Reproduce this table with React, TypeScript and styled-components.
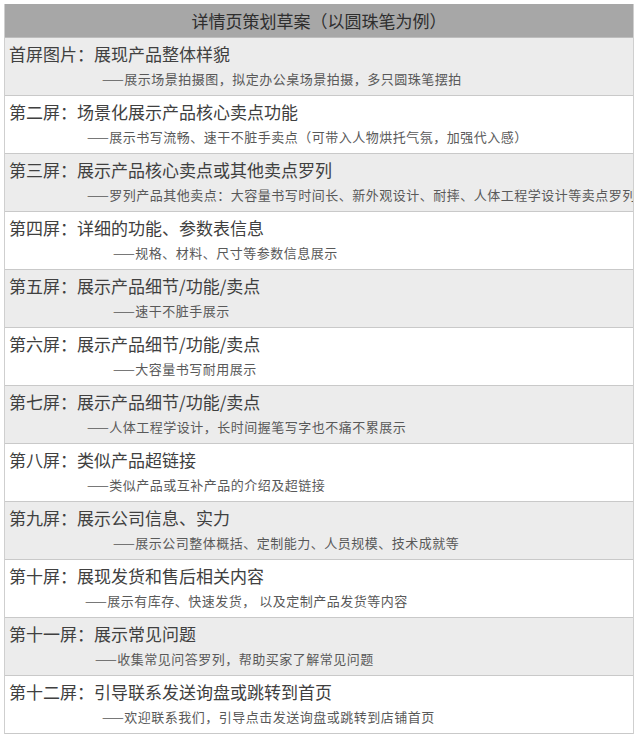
import styled, { createGlobalStyle } from "styled-components";

const GlobalStyle = createGlobalStyle`
  body {
    margin: 0;
    background: #ffffff;
    font-family: "Noto Sans CJK SC", "Noto Sans", sans-serif;
  }
`;

const Sheet = styled.div`
  margin: 4px 0 0 4px;
  width: 630px;
  border-left: 1px solid #cfcfcf;
  border-right: 1px solid #cfcfcf;
  box-sizing: border-box;
  overflow: hidden;
`;

const Header = styled.div`
  height: 33px;
  background: #a7a7a7;
  border-bottom: 1px solid #bdbdbd;
  display: flex;
  align-items: center;
  justify-content: center;
  font-size: 17px;
  color: #2e2e2e;
`;

const Row = styled.div<{ $shade: boolean }>`
  background: ${(p) => (p.$shade ? "#ececec" : "#ffffff")};
  border-bottom: 1px solid #c9c9c9;
  padding: 5px 0 0 4px;
  box-sizing: border-box;
  height: 58px;
  display: flex;
  flex-direction: column;
  gap: 7px;
`;

const Title = styled.div`
  font-size: 17px;
  line-height: 21px;
  color: #404040;
  white-space: nowrap;
`;

const Note = styled.div<{ $indent: number }>`
  font-size: 13px;
  line-height: 16px;
  letter-spacing: 0.5px;
  color: #595959;
  white-space: nowrap;
  padding-left: ${(p) => p.$indent}px;
`;

const screens = [
  { title: "首屏图片：展现产品整体样貌", note: "——展示场景拍摄图，拟定办公桌场景拍摄，多只圆珠笔摆拍", indent: 93 },
  { title: "第二屏：场景化展示产品核心卖点功能", note: "——展示书写流畅、速干不脏手卖点（可带入人物烘托气氛，加强代入感）", indent: 78 },
  { title: "第三屏：展示产品核心卖点或其他卖点罗列", note: "——罗列产品其他卖点：大容量书写时间长、新外观设计、耐摔、人体工程学设计等卖点罗列", indent: 78 },
  { title: "第四屏：详细的功能、参数表信息", note: "——规格、材料、尺寸等参数信息展示", indent: 104 },
  { title: "第五屏：展示产品细节/功能/卖点", note: "——速干不脏手展示", indent: 104 },
  { title: "第六屏：展示产品细节/功能/卖点", note: "——大容量书写耐用展示", indent: 104 },
  { title: "第七屏：展示产品细节/功能/卖点", note: "——人体工程学设计，长时间握笔写字也不痛不累展示", indent: 78 },
  { title: "第八屏：类似产品超链接", note: "——类似产品或互补产品的介绍及超链接", indent: 78 },
  { title: "第九屏：展示公司信息、实力", note: "——展示公司整体概括、定制能力、人员规模、技术成就等", indent: 104 },
  { title: "第十屏：展现发货和售后相关内容", note: "——展示有库存、快速发货， 以及定制产品发货等内容", indent: 76 },
  { title: "第十一屏：展示常见问题", note: "——收集常见问答罗列，帮助买家了解常见问题", indent: 86 },
  { title: "第十二屏：引导联系发送询盘或跳转到首页", note: "——欢迎联系我们，引导点击发送询盘或跳转到店铺首页", indent: 93 },
];

const App = () => {
  return (
    <>
      <GlobalStyle />
      <Sheet>
        <Header>详情页策划草案（以圆珠笔为例）</Header>
        {screens.map((s, i) => (
          <Row key={s.title} $shade={i % 2 === 0}>
            <Title>{s.title}</Title>
            <Note $indent={s.indent}>{s.note}</Note>
          </Row>
        ))}
      </Sheet>
    </>
  );
};

export default App;
